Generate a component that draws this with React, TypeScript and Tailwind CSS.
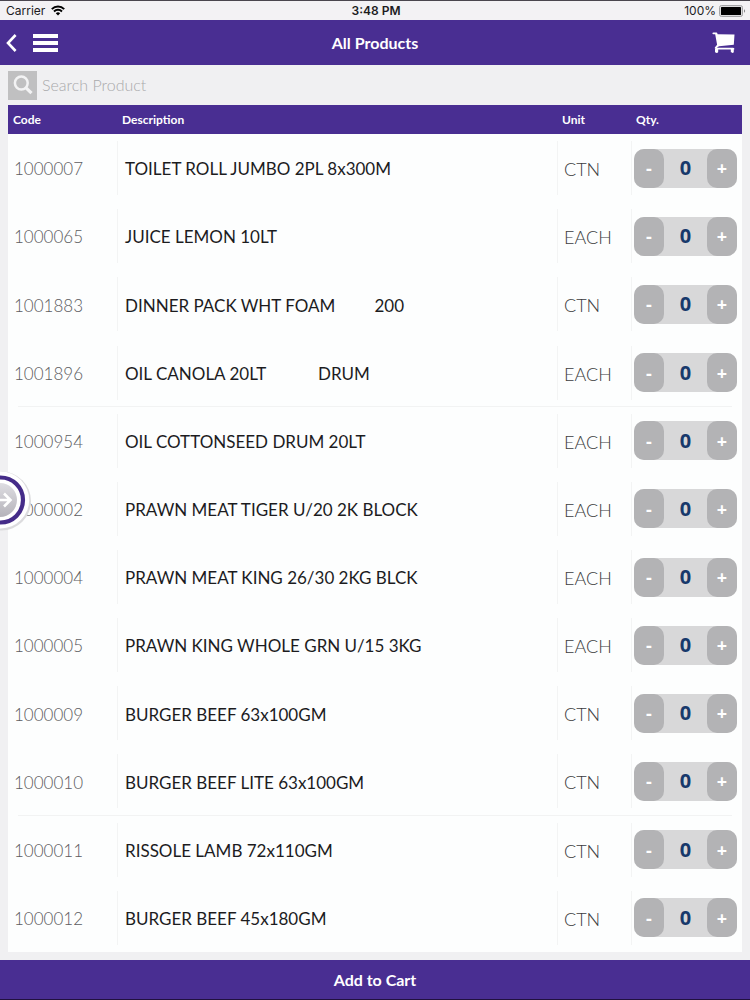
import { useState } from "react";

type Product = { code: string; description: string; unit: string; ruled?: boolean };

const PRODUCTS: Product[] = [
  { code: "1000007", description: "TOILET ROLL JUMBO 2PL 8x300M", unit: "CTN" },
  { code: "1000065", description: "JUICE LEMON 10LT", unit: "EACH" },
  { code: "1001883", description: "DINNER PACK WHT FOAM         200", unit: "CTN" },
  { code: "1001896", description: "OIL CANOLA 20LT            DRUM", unit: "EACH", ruled: true },
  { code: "1000954", description: "OIL COTTONSEED DRUM 20LT", unit: "EACH" },
  { code: "1000002", description: "PRAWN MEAT TIGER U/20 2K BLOCK", unit: "EACH" },
  { code: "1000004", description: "PRAWN MEAT KING 26/30 2KG BLCK", unit: "EACH" },
  { code: "1000005", description: "PRAWN KING WHOLE GRN U/15 3KG", unit: "EACH" },
  { code: "1000009", description: "BURGER BEEF 63x100GM", unit: "CTN" },
  { code: "1000010", description: "BURGER BEEF LITE 63x100GM", unit: "CTN", ruled: true },
  { code: "1000011", description: "RISSOLE LAMB 72x110GM", unit: "CTN" },
  { code: "1000012", description: "BURGER BEEF 45x180GM", unit: "CTN" },
];

function StatusBar() {
  return (
    <div className="grid h-5 shrink-0 grid-cols-[1fr_auto_1fr] items-center border-t border-[#4a464e] bg-[#f3f2f4] pl-1.5 pr-1 font-['Inter',sans-serif] text-xs text-[#1c1c1e]">
      <div className="flex items-center gap-1.5">
        <span>Carrier</span>
        <svg width="14" height="11" viewBox="0 0 14 11" fill="none" stroke="#000" strokeWidth="2" aria-hidden="true">
          <path d="M.8 4.1a8.8 8.8 0 0 1 12.4 0" />
          <path d="M3 6.5a5.7 5.7 0 0 1 8 0" />
          <path d="M7 10.6 4.8 8.3a3.1 3.1 0 0 1 4.4 0Z" fill="#000" stroke="none" />
        </svg>
      </div>
      <div className="text-center font-semibold">3:48 PM</div>
      <div className="flex items-center justify-end gap-[3px]">
        <span>100%</span>
        <svg width="27" height="12" viewBox="0 0 27 12" aria-hidden="true">
          <rect x=".5" y=".5" width="23" height="11" rx="2" fill="#dcdcdd" stroke="#a4a4a6" />
          <rect x="2" y="2" width="20" height="8" rx=".5" fill="#000" />
          <path d="M25 4.2c1.5.6 1.5 3 0 3.6Z" fill="#8a8a8c" />
        </svg>
      </div>
    </div>
  );
}

function Header() {
  return (
    <header className="grid h-[45px] shrink-0 grid-cols-[1fr_auto_1fr] items-center bg-[#492e92] px-1.5 text-white">
      <div className="flex items-center gap-4">
        <button type="button" aria-label="Back">
          <svg width="11" height="18" viewBox="0 0 11 18" fill="none" stroke="#fff" strokeWidth="2.6" aria-hidden="true">
            <path d="M9.6 1 2 9l7.6 8" />
          </svg>
        </button>
        <button type="button" aria-label="Menu">
          <svg width="25" height="18" viewBox="0 0 25 18" fill="#fff" aria-hidden="true">
            <path d="M0 0h25v4H0zM0 7h25v4H0zM0 14h25v4H0z" />
          </svg>
        </button>
      </div>
      <h1 className="text-base font-bold">All Products</h1>
      <button type="button" aria-label="Cart" className="mr-2 justify-self-end">
        <svg width="24" height="22" viewBox="0 0 24 22" fill="#fff" aria-hidden="true">
          <path d="M1.4.6h3c.5 0 .9.3 1 .8l.2.8 16.9.4-.7 10.2L7 14.2l-2.2 1.6h16.1c.8 0 1.3.3 1.5.9l-.2.9h-17l-1.9-.8c-.7-.5-.7-1.3-.1-1.9l1.9-2.2L3.2 2.3H1.4C.1 2.2.1.7 1.4.6Z" />
          <path d="M3 17h3.2v2.7c0 1.6-3.2 1.6-3.2 0ZM18.8 17h3v2.7c0 1.6-3 1.6-3 0Z" />
        </svg>
      </button>
    </header>
  );
}

function Stepper({ label }: { label: string }) {
  const [qty, setQty] = useState(0);
  const button = "h-full w-[30px] rounded-[10px] bg-[#b3b3b5] font-['Open_Sans',sans-serif] text-lg font-bold text-white";
  return (
    <div className="flex h-[39px] w-[103px] items-center justify-between rounded-[10px] bg-[#d8d8d9]">
      <button type="button" className={button} aria-label={`Decrease ${label}`} onClick={() => setQty(Math.max(0, qty - 1))}>
        -
      </button>
      <output className="font-['Open_Sans',sans-serif] text-xl font-bold text-[#17396b]">{qty}</output>
      <button type="button" className={button} aria-label={`Increase ${label}`} onClick={() => setQty(qty + 1)}>
        +
      </button>
    </div>
  );
}

function ProductRow({ product }: { product: Product }) {
  return (
    <tr className="relative">
      <td className="p-0 pl-1.5 pt-0.5 font-light text-[#5c5c60]">
        {product.code}
        {product.ruled && <span className="absolute inset-x-2.5 bottom-0 h-px bg-[#f2f3f3]" />}
      </td>
      <td className="p-0">
        <div className="flex h-[54px] items-center whitespace-pre border-l border-[#f3f4f4] pl-[7px] pt-0.5 text-[#1c1c1e]">
          {product.description}
        </div>
      </td>
      <td className="p-0">
        <div className="flex h-[54px] items-center border-l border-[#f3f4f4] pl-1.5 pt-0.5 text-lg font-light text-[#3c3c40]">
          {product.unit}
        </div>
      </td>
      <td className="p-0">
        <div className="flex h-[54px] items-center border-l border-[#f3f4f4] pl-0.5">
          <Stepper label={product.description} />
        </div>
      </td>
    </tr>
  );
}

function DrawerHandle() {
  return (
    <button type="button" aria-label="Open panel" className="absolute -left-7 top-[471px] rounded-full">
      <svg width="60" height="60" viewBox="0 0 60 60" fill="none" aria-hidden="true">
        <defs>
          <linearGradient id="knob" x1="0" y1="0" x2="0" y2="1">
            <stop offset="0" stopColor="#dedde2" />
            <stop offset="1" stopColor="#b5b3ba" />
          </linearGradient>
        </defs>
        <circle cx="29.5" cy="30" r="29.5" fill="#dcdcde" />
        <circle cx="28.8" cy="29" r="28.4" fill="#fff" />
        <circle cx="28.5" cy="29" r="22.5" stroke="#452c89" strokeWidth="4.2" />
        <circle cx="28" cy="29" r="17" fill="url(#knob)" />
        <path d="M22 29h15M32 22.5l6.5 6.5-6.5 6.5" stroke="#fff" strokeWidth="2.6" />
      </svg>
    </button>
  );
}

export default function App() {
  return (
    <div className="relative flex h-screen min-h-[960px] flex-col overflow-hidden bg-[#f0f0f2] font-['Lato',sans-serif]">
      <StatusBar />
      <Header />
      <main className="flex min-h-0 flex-1 flex-col px-2 pb-2">
        <div className="flex h-10 shrink-0 items-center gap-[5px]">
          <button type="button" aria-label="Search" className="flex size-[29px] items-center justify-center bg-[#c0c0c1]">
            <svg width="20" height="20" viewBox="0 0 20 20" fill="none" stroke="#f3f3f4" aria-hidden="true">
              <circle cx="8.3" cy="8" r="6.4" strokeWidth="2.5" />
              <path d="m13 12.8 5.5 5.4" strokeWidth="3.2" />
            </svg>
          </button>
          <input
            type="search"
            aria-label="Search Product"
            placeholder="Search Product"
            className="min-w-0 flex-1 bg-transparent text-base font-light outline-none placeholder:text-[#a9a9ab]"
          />
        </div>
        <div className="min-h-0 flex-1">
          <table className="h-full w-full table-fixed border-collapse bg-[#fdfefe] text-left text-[17px]">
            <thead className="bg-[#492e92] text-xs text-white">
              <tr className="h-[29px]">
                <th scope="col" className="w-[109px] p-0 pl-[5px]">Code</th>
                <th scope="col" className="p-0 pl-[5px]">Description</th>
                <th scope="col" className="w-[74px] p-0 pl-[5px]">Unit</th>
                <th scope="col" className="w-[111px] p-0 pl-[5px]">Qty.</th>
              </tr>
            </thead>
            <tbody>
              {PRODUCTS.map((product) => (
                <ProductRow key={product.code} product={product} />
              ))}
            </tbody>
          </table>
        </div>
      </main>
      <button type="button" className="h-10 shrink-0 border-b border-[#21113f] bg-[#492e92] text-base font-bold text-white">
        Add to Cart
      </button>
      <DrawerHandle />
    </div>
  );
}
